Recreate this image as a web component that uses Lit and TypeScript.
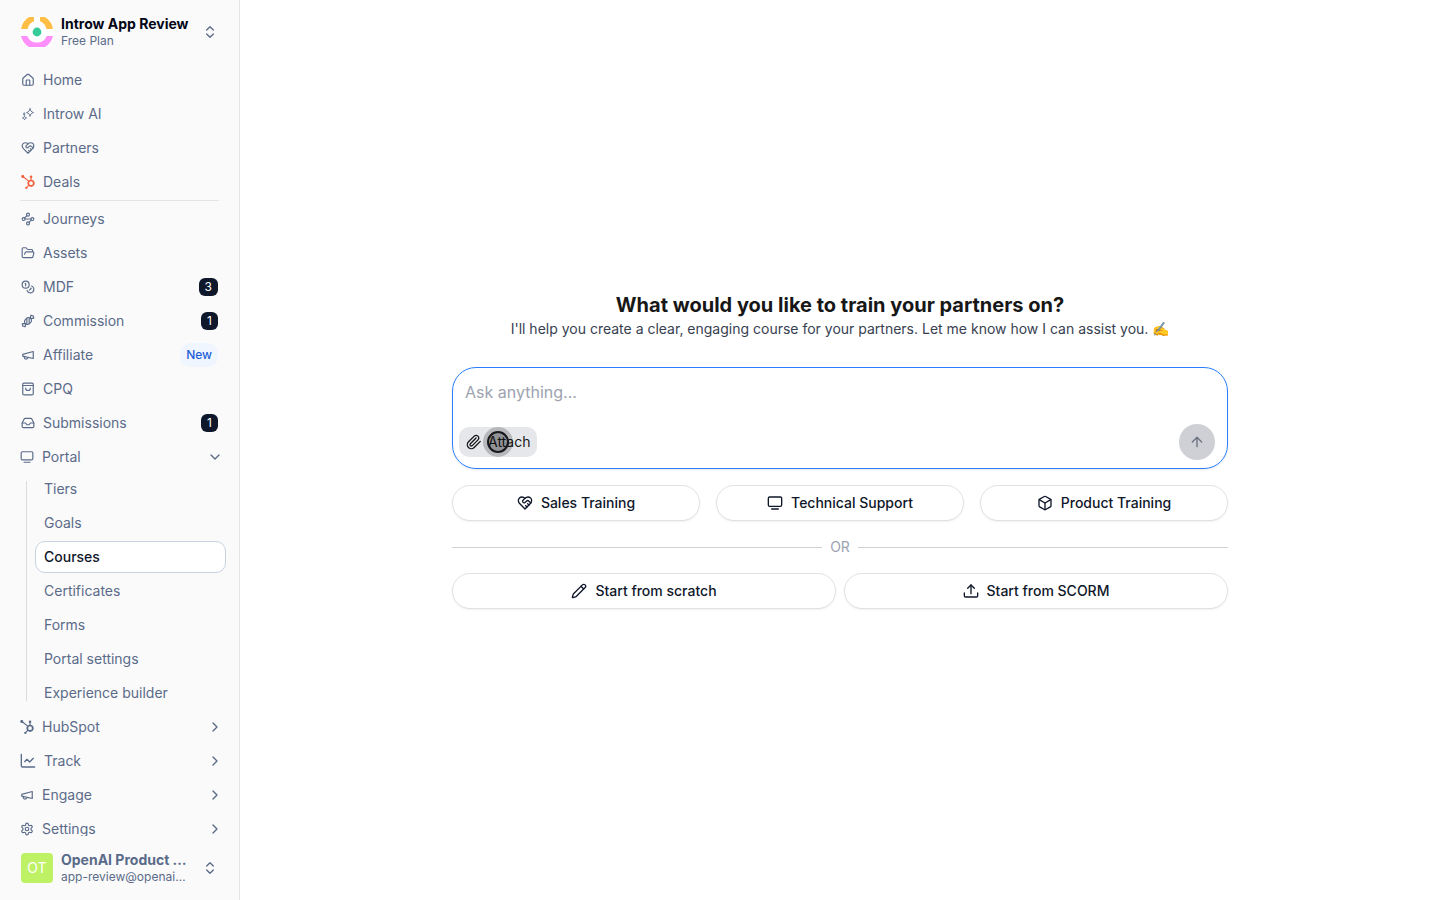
import { LitElement, html, css, svg, nothing } from "lit";
import { customElement, property, state } from "lit/decorators.js";

const line = (...paths: string[]) => svg`${paths.map((d) => svg`<path d=${d}></path>`)}`;

const handshake = line(
  "M19 14c1.49-1.46 3-3.21 3-5.5A5.5 5.5 0 0 0 16.5 3c-1.76 0-3 .5-4.5 2-1.5-1.5-2.74-2-4.5-2A5.5 5.5 0 0 0 2 8.5c0 2.3 1.5 4.05 3 5.5l7 7Z",
  "M12 5 9.04 7.96a2.17 2.17 0 0 0 0 3.08c.82.82 2.13.85 3 .07l2.07-1.9a2.82 2.82 0 0 1 3.79 0l2.96 2.66",
  "m18 15-2-2",
  "m15 18-2-2",
);

const ICONS: Record<string, unknown> = {
  home: line(
    "M15 21v-8a1 1 0 0 0-1-1h-4a1 1 0 0 0-1 1v8",
    "M3 10a2 2 0 0 1 .709-1.528l7-5.999a2 2 0 0 1 2.582 0l7 5.999A2 2 0 0 1 21 10v9a2 2 0 0 1-2 2H5a2 2 0 0 1-2-2z",
  ),
  sparkles: svg`<g stroke-width="1.5"><path d="M15.500 3c.7 3.700 2 5.300 6 6.500-4 1.200-5.300 2.800-6 6.500-.7-3.700-2-5.300-6-6.500 4-1.200 5.300-2.800 6-6.500Z"></path><path d="M6 15.500c.5 2 1.300 2.800 3.500 3.300-2.200.5-3 1.300-3.500 3.300-.5-2-1.300-2.800-3.500-3.300 2.200-.5 3-1.300 3.500-3.300Z"></path><path d="M5.500 10.500c.3 1 .7 1.400 1.800 1.700-1.100.3-1.500.7-1.800 1.700-.3-1-.7-1.400-1.800-1.700 1.100-.3 1.500-.7 1.800-1.700Z"></path></g>`,
  handshake,
  waypoints: svg`<circle cx="12" cy="4.500" r="2.500"></circle><circle cx="4.500" cy="12" r="2.500"></circle><circle cx="19.500" cy="12" r="2.500"></circle><circle cx="12" cy="19.500" r="2.500"></circle><path d="m10.200 6.300-3.900 3.900M7 12h10m-3.200 5.700 3.900-3.900"></path>`,
  folder: line(
    "m6 14 1.450-2.900A2 2 0 0 1 9.240 10H20a2 2 0 0 1 1.940 2.500l-1.550 6a2 2 0 0 1-1.940 1.500H4a2 2 0 0 1-2-2V5c0-1.100.9-2 2-2h3.930a2 2 0 0 1 1.660.9l.82 1.200a2 2 0 0 0 1.660.9H18a2 2 0 0 1 2 2v2",
  ),
  coins: svg`<circle cx="8" cy="8" r="6"></circle><path d="M18.090 10.370A6 6 0 1 1 10.340 18M7 6h1v4m8.710 3.880.7.710-2.820 2.820"></path>`,
  candy: line(
    "m9.500 7.500-2 2a4.950 4.950 0 1 0 7 7l2-2a4.950 4.950 0 1 0-7-7Z",
    "M14 6.500v10",
    "M10 7.500v10",
    "m16 7 1-5 1.370.68A3 3 0 0 0 19.700 3H21v1.300c0 .46.1.920.320 1.330L22 7l-5 1",
    "m8 17-1 5-1.370-.68A3 3 0 0 0 4.300 21H3v-1.300a3 3 0 0 0-.320-1.330L2 17l5-1",
  ),
  megaphone: line("m3 11 18-5v12L3 14v-3z", "M11.600 16.800a3 3 0 1 1-5.800-1.600"),
  bag: line(
    "M5 2h14a2 2 0 0 1 2 2V20a2 2 0 0 1-2 2H5a2 2 0 0 1-2-2V4a2 2 0 0 1 2-2Z",
    "M3 6h18",
    "M16 10.500a4 4 0 0 1-8 0",
  ),
  inbox: line(
    "M22 12h-6l-2 3h-4l-2-3H2",
    "M5.450 5.110 2 12v6a2 2 0 0 0 2 2h16a2 2 0 0 0 2-2v-6l-3.450-6.890A2 2 0 0 0 16.760 4H7.240a2 2 0 0 0-1.790 1.110z",
  ),
  screen: svg`<rect x="2" y="3" width="20" height="14" rx="2"></rect><path d="M7 21h10"></path>`,
  chart: line("M2 2v17a2 2 0 0 0 2 2h18", "m7 13 3.500-3.500 4 4L20 8"),
  gear: svg`<path d="M12.220 2h-.44a2 2 0 0 0-2 2v.18a2 2 0 0 1-1 1.730l-.43.25a2 2 0 0 1-2 0l-.15-.08a2 2 0 0 0-2.730.730l-.22.380a2 2 0 0 0 .730 2.730l.15.1a2 2 0 0 1 1 1.720v.510a2 2 0 0 1-1 1.740l-.15.090a2 2 0 0 0-.730 2.730l.22.380a2 2 0 0 0 2.730.730l.15-.08a2 2 0 0 1 2 0l.43.25a2 2 0 0 1 1 1.730V20a2 2 0 0 0 2 2h.44a2 2 0 0 0 2-2v-.18a2 2 0 0 1 1-1.730l.43-.25a2 2 0 0 1 2 0l.15.08a2 2 0 0 0 2.730-.730l.22-.390a2 2 0 0 0-.730-2.730l-.15-.08a2 2 0 0 1-1-1.740v-.5a2 2 0 0 1 1-1.740l.15-.090a2 2 0 0 0 .730-2.730l-.22-.380a2 2 0 0 0-2.730-.730l-.15.08a2 2 0 0 1-2 0l-.43-.25a2 2 0 0 1-1-1.730V4a2 2 0 0 0-2-2z"></path><circle cx="12" cy="12" r="3"></circle>`,
  hubspot: svg`<path fill="currentColor" stroke="none" d="M18.164 7.930V5.084a2.198 2.198 0 0 0 1.267-1.978v-.067A2.200 2.200 0 0 0 17.238.845h-.067a2.200 2.200 0 0 0-2.193 2.193v.067a2.196 2.196 0 0 0 1.252 1.973l.013.006v2.852a6.220 6.220 0 0 0-2.969 1.310l.012-.010-7.828-6.095A2.497 2.497 0 1 0 4.300 4.656l-.012.006 7.697 5.991a6.176 6.176 0 0 0-1.038 3.446c0 1.343.425 2.588 1.147 3.607l-.013-.020-2.342 2.343a1.968 1.968 0 0 0-.58-.095h-.002a2.033 2.033 0 1 0 2.033 2.033 1.978 1.978 0 0 0-.1-.595l.005.014 2.317-2.317a6.247 6.247 0 1 0 4.782-11.134l-.036-.005zm-.964 9.378a3.206 3.206 0 1 1 3.215-3.207v.002a3.206 3.206 0 0 1-3.207 3.207z"></path>`,
  right: line("m9 18 6-6-6-6"),
  down: line("m6 9 6 6 6-6"),
  updown: line("m7 15 5 5 5-5", "m7 9 5-5 5 5"),
  clip: line(
    "m21.440 11.050-9.190 9.190a6 6 0 0 1-8.490-8.490l8.570-8.570A4 4 0 1 1 18 8.840l-8.590 8.570a2 2 0 0 1-2.830-2.830l8.490-8.480",
  ),
  up: line("m5 12 7-7 7 7", "M12 19V5"),
  box: line(
    "M21 8a2 2 0 0 0-1-1.730l-7-4a2 2 0 0 0-2 0l-7 4A2 2 0 0 0 3 8v8a2 2 0 0 0 1 1.730l7 4a2 2 0 0 0 2 0l7-4A2 2 0 0 0 21 16Z",
    "m3.300 7 8.700 5 8.700-5",
    "M12 22V12",
  ),
  pencil: line(
    "M21.174 6.812a1 1 0 0 0-3.986-3.987L3.842 16.174a2 2 0 0 0-.5.830l-1.321 4.352a.5.5 0 0 0 .623.622l4.353-1.320a2 2 0 0 0 .830-.497z",
    "m15 5 4 4",
  ),
  upload: line("M12 16V3", "m7 8 5-5 5 5", "M2 15v4a2 2 0 0 0 2 2h16a2 2 0 0 0 2-2v-4"),
};

@customElement("ui-icon")
export class UiIcon extends LitElement {
  @property() name = "";
  @property({ type: Number }) size = 14;

  static styles = css`
    :host {
      display: inline-flex;
      flex: none;
    }
    .glyph {
      display: block;
      fill: none;
      stroke: currentColor;
      stroke-width: 2;
      stroke-linecap: round;
      stroke-linejoin: round;
    }
  `;

  render() {
    return html`<svg class="glyph" width=${this.size} height=${this.size} viewBox="0 0 24 24" aria-hidden="true">
      ${ICONS[this.name]}
    </svg>`;
  }
}

interface NavItem {
  label: string;
  icon: string;
  tone?: "brand";
  count?: number;
  tag?: string;
}

const PRIMARY: NavItem[] = [
  { label: "Home", icon: "home" },
  { label: "Introw AI", icon: "sparkles" },
  { label: "Partners", icon: "handshake" },
  { label: "Deals", icon: "hubspot", tone: "brand" },
];

const TOOLS: NavItem[] = [
  { label: "Journeys", icon: "waypoints" },
  { label: "Assets", icon: "folder" },
  { label: "MDF", icon: "coins", count: 3 },
  { label: "Commission", icon: "candy", count: 1 },
  { label: "Affiliate", icon: "megaphone", tag: "New" },
  { label: "CPQ", icon: "bag" },
  { label: "Submissions", icon: "inbox", count: 1 },
];

const PORTAL = ["Tiers", "Goals", "Courses", "Certificates", "Forms", "Portal settings", "Experience builder"];

const GROUPS: NavItem[] = [
  { label: "HubSpot", icon: "hubspot" },
  { label: "Track", icon: "chart" },
  { label: "Engage", icon: "megaphone" },
  { label: "Settings", icon: "gear" },
];

@customElement("app-sidebar")
export class AppSidebar extends LitElement {
  @state() private open = true;
  @state() private current = "Courses";

  static styles = css`
    :host {
      display: flex;
      flex-direction: column;
      box-sizing: border-box;
      width: 240px;
      flex: none;
      height: 100vh;
      background: #fafafa;
      border-right: 1px solid #e5e5e5;
      color: #5a6b89;
      font-size: 14px;
      line-height: 20px;
    }
    button {
      font: inherit;
      color: inherit;
      background: none;
      border: 0;
      text-align: left;
      cursor: pointer;
    }
    .account {
      display: flex;
      align-items: center;
      gap: 8px;
      height: 64px;
      flex: none;
      padding: 0 21px;
    }
    .logo,
    .avatar {
      display: block;
      width: 32px;
      height: 30px;
      flex: none;
      border-radius: 4px;
    }
    .logo {
      border-radius: 8px;
    }
    .avatar {
      display: grid;
      place-items: center;
      background: #bef264;
      color: #fff;
    }
    .who {
      display: flex;
      flex-direction: column;
      flex: 1;
      min-width: 0;
    }
    .name,
    .detail {
      overflow: hidden;
      text-overflow: ellipsis;
      white-space: nowrap;
    }
    .name {
      font-weight: 700;
      line-height: 18px;
    }
    .name.strong {
      color: #020617;
    }
    .detail {
      font-size: 12px;
      line-height: 16px;
    }
    nav {
      flex: 1;
      min-height: 0;
      overflow: hidden;
      display: flex;
      flex-direction: column;
      gap: 2px;
    }
    .item {
      display: flex;
      align-items: center;
      box-sizing: border-box;
      height: 32px;
      flex: none;
      gap: 8px;
      padding: 0 21px;
      width: 100%;
      color: inherit;
      text-decoration: none;
    }
    .item.group {
      padding: 0 16px 0 20px;
    }
    .label {
      flex: 1;
    }
    .brand {
      color: #f2613f;
    }
    .rule {
      flex: none;
      height: 1px;
      width: auto;
      margin: 0 20px;
      border: 0;
      background: #e5e5e5;
    }
    .count {
      background: #0f172a;
      color: #fff;
      font-size: 12px;
      line-height: 18px;
      padding: 0 6px;
      border-radius: 6px;
    }
    .tag {
      background: #eff6ff;
      color: #1d5fd8;
      font-size: 12px;
      line-height: 16px;
      padding: 4px 6px;
      border-radius: 10px;
      font-weight: 500;
    }
    .count,
    .tag {
      flex: none;
    }
    .sub {
      position: relative;
      display: flex;
      flex-direction: column;
      gap: 2px;
      flex: none;
      margin-top: -2px;
      padding: 0 13px 0 35px;
    }
    .sub::before {
      content: "";
      position: absolute;
      left: 26px;
      top: 8px;
      bottom: 8px;
      width: 1px;
      background: #d9dbdf;
    }
    .leaf {
      display: flex;
      align-items: center;
      box-sizing: border-box;
      height: 32px;
      padding: 0 8px;
      border: 1px solid transparent;
      border-radius: 10px;
      color: inherit;
      text-decoration: none;
    }
    .leaf.active {
      background: #fff;
      border-color: #c7d3e2;
      color: #0f172a;
      font-weight: 500;
    }
  `;

  private item(i: NavItem) {
    return html`<a class="item" href="#">
      <ui-icon class=${i.tone ?? ""} name=${i.icon}></ui-icon>
      <span class="label">${i.label}</span>
      ${i.count ? html`<span class="count">${i.count}</span>` : nothing}
      ${i.tag ? html`<span class="tag">${i.tag}</span>` : nothing}
    </a>`;
  }

  render() {
    return html`
      <button class="account">
        <svg class="logo" viewBox="0 0 32 30" aria-hidden="true">
          <rect width="32" height="30" fill="#fff"></rect>
          <path d="M0 12A17 17 0 0 1 8 0H13V4.200A11 11 0 0 0 6.500 12Z" fill="#ffbf47"></path>
          <path d="M32 12A17 17 0 0 0 24 0H19V4.200A11 11 0 0 1 25.500 12Z" fill="#ffbf47"></path>
          <path d="M0 19A17 17 0 0 0 8 30H24A17 17 0 0 0 32 19H25.800A10.600 10.600 0 0 1 6.200 19Z" fill="#ff8ffa"></path>
          <circle cx="16" cy="15" r="4.400" fill="#35cc98"></circle>
        </svg>
        <span class="who">
          <span class="name strong">Introw App Review</span>
          <span class="detail">Free Plan</span>
        </span>
        <ui-icon name="updown" size="16"></ui-icon>
      </button>
      <nav aria-label="Main">
        ${PRIMARY.map((i) => this.item(i))}
        <hr class="rule" />
        ${TOOLS.map((i) => this.item(i))}
        <button class="item group" aria-expanded=${this.open} @click=${() => (this.open = !this.open)}>
          <ui-icon name="screen"></ui-icon>
          <span class="label">Portal</span>
          <ui-icon name=${this.open ? "down" : "right"} size="16"></ui-icon>
        </button>
        ${this.open
          ? html`<div class="sub">
              ${PORTAL.map(
                (p) => html`<a
                  class="leaf ${p === this.current ? "active" : ""}"
                  href="#"
                  @click=${() => (this.current = p)}
                  >${p}</a
                >`,
              )}
            </div>`
          : nothing}
        ${GROUPS.map(
          (g) => html`<button class="item group">
            <ui-icon name=${g.icon} size=${g.icon === "chart" ? 16 : 14}></ui-icon>
            <span class="label">${g.label}</span>
            <ui-icon name="right" size="16"></ui-icon>
          </button>`,
        )}
      </nav>
      <button class="account">
        <span class="avatar">OT</span>
        <span class="who">
          <span class="name">OpenAI Product …</span>
          <span class="detail">app-review@openai…</span>
        </span>
        <ui-icon name="updown" size="16"></ui-icon>
      </button>
    `;
  }
}

@customElement("app-root")
export class AppRoot extends LitElement {
  static styles = css`
    :host {
      display: flex;
      min-height: 100vh;
      background: #fff;
      color: #171717;
      font-family: Inter, "Liberation Sans", sans-serif;
      font-size: 14px;
      line-height: 20px;
    }
    main {
      flex: 1;
      display: flex;
      flex-direction: column;
      justify-content: center;
      align-items: center;
      padding: 0 24px;
    }
    .panel {
      width: 100%;
      max-width: 776px;
      display: flex;
      flex-direction: column;
      gap: 16px;
    }
    .intro {
      text-align: center;
      padding-bottom: 12px;
    }
    h1 {
      margin: 0;
      font-size: 20px;
      line-height: 28px;
      font-weight: 700;
    }
    p {
      margin: 0;
      color: #374151;
    }
    .composer {
      display: flex;
      flex-direction: column;
      gap: 20px;
      box-sizing: border-box;
      padding: 12px 12px 8px;
      border: 1px solid #2b7fff;
      border-radius: 24px;
      box-shadow: 0 1px 2px rgba(0, 0, 0, 0.1);
    }
    textarea {
      display: block;
      width: 100%;
      height: 24px;
      box-sizing: border-box;
      border: 0;
      padding: 0;
      outline: 0;
      resize: none;
      overflow: hidden;
      background: none;
      font: inherit;
      font-size: 16px;
      line-height: 24px;
    }
    textarea::placeholder {
      color: #9ca3af;
    }
    .tools {
      display: flex;
      justify-content: space-between;
      align-items: center;
      margin-left: -6px;
    }
    button {
      font: inherit;
      color: inherit;
      cursor: pointer;
    }
    .attach {
      position: relative;
      display: flex;
      align-items: center;
      gap: 6px;
      height: 30px;
      padding: 0 7px;
      border: 0;
      border-radius: 10px;
      background: #e5e7eb;
    }
    .pointer {
      position: absolute;
      left: 24px;
      top: 0;
      width: 30px;
      height: 30px;
      pointer-events: none;
    }
    .send {
      display: grid;
      place-items: center;
      width: 36px;
      height: 36px;
      padding: 0;
      border: 0;
      border-radius: 50%;
      background: #cfd0d5;
      color: #6b7280;
    }
    .row {
      display: grid;
      grid-auto-flow: column;
      grid-auto-columns: 1fr;
      gap: 16px;
    }
    .row.tight {
      gap: 8px;
    }
    .pill {
      display: flex;
      align-items: center;
      justify-content: center;
      gap: 8px;
      box-sizing: border-box;
      height: 36px;
      padding: 0 12px;
      border: 1px solid #e2e2e4;
      border-radius: 18px;
      background: #fff;
      box-shadow: 0 1px 2px rgba(0, 0, 0, 0.06);
      color: #0f172a;
      font-weight: 500;
    }
    .or {
      display: flex;
      align-items: center;
      gap: 8px;
      color: #9ca3af;
    }
    .or::before,
    .or::after {
      content: "";
      flex: 1;
      height: 1px;
      background: #d0d1d4;
    }
  `;

  private pill(icon: string, label: string) {
    return html`<button class="pill"><ui-icon name=${icon} size="16"></ui-icon>${label}</button>`;
  }

  render() {
    return html`
      <app-sidebar></app-sidebar>
      <main>
        <div class="panel">
          <div class="intro">
            <h1>What would you like to train your partners on?</h1>
            <p>I'll help you create a clear, engaging course for your partners. Let me know how I can assist you. ✍️</p>
          </div>
          <div class="composer">
            <textarea aria-label="Ask anything" placeholder="Ask anything..." rows="1"></textarea>
            <div class="tools">
              <button class="attach">
                <ui-icon name="clip" size="16"></ui-icon>Attach
                <svg class="pointer" viewBox="0 0 30 30" aria-hidden="true">
                  <circle cx="15" cy="15" r="15" fill="#000" fill-opacity="0.2"></circle>
                  <circle cx="15" cy="15" r="10" fill="#000" fill-opacity="0.2" stroke="#16181c" stroke-width="2"></circle>
                </svg>
              </button>
              <button class="send" aria-label="Send"><ui-icon name="up" size="16"></ui-icon></button>
            </div>
          </div>
          <div class="row">
            ${this.pill("handshake", "Sales Training")} ${this.pill("screen", "Technical Support")}
            ${this.pill("box", "Product Training")}
          </div>
          <div class="or">OR</div>
          <div class="row tight">
            ${this.pill("pencil", "Start from scratch")} ${this.pill("upload", "Start from SCORM")}
          </div>
        </div>
      </main>
    `;
  }
}
